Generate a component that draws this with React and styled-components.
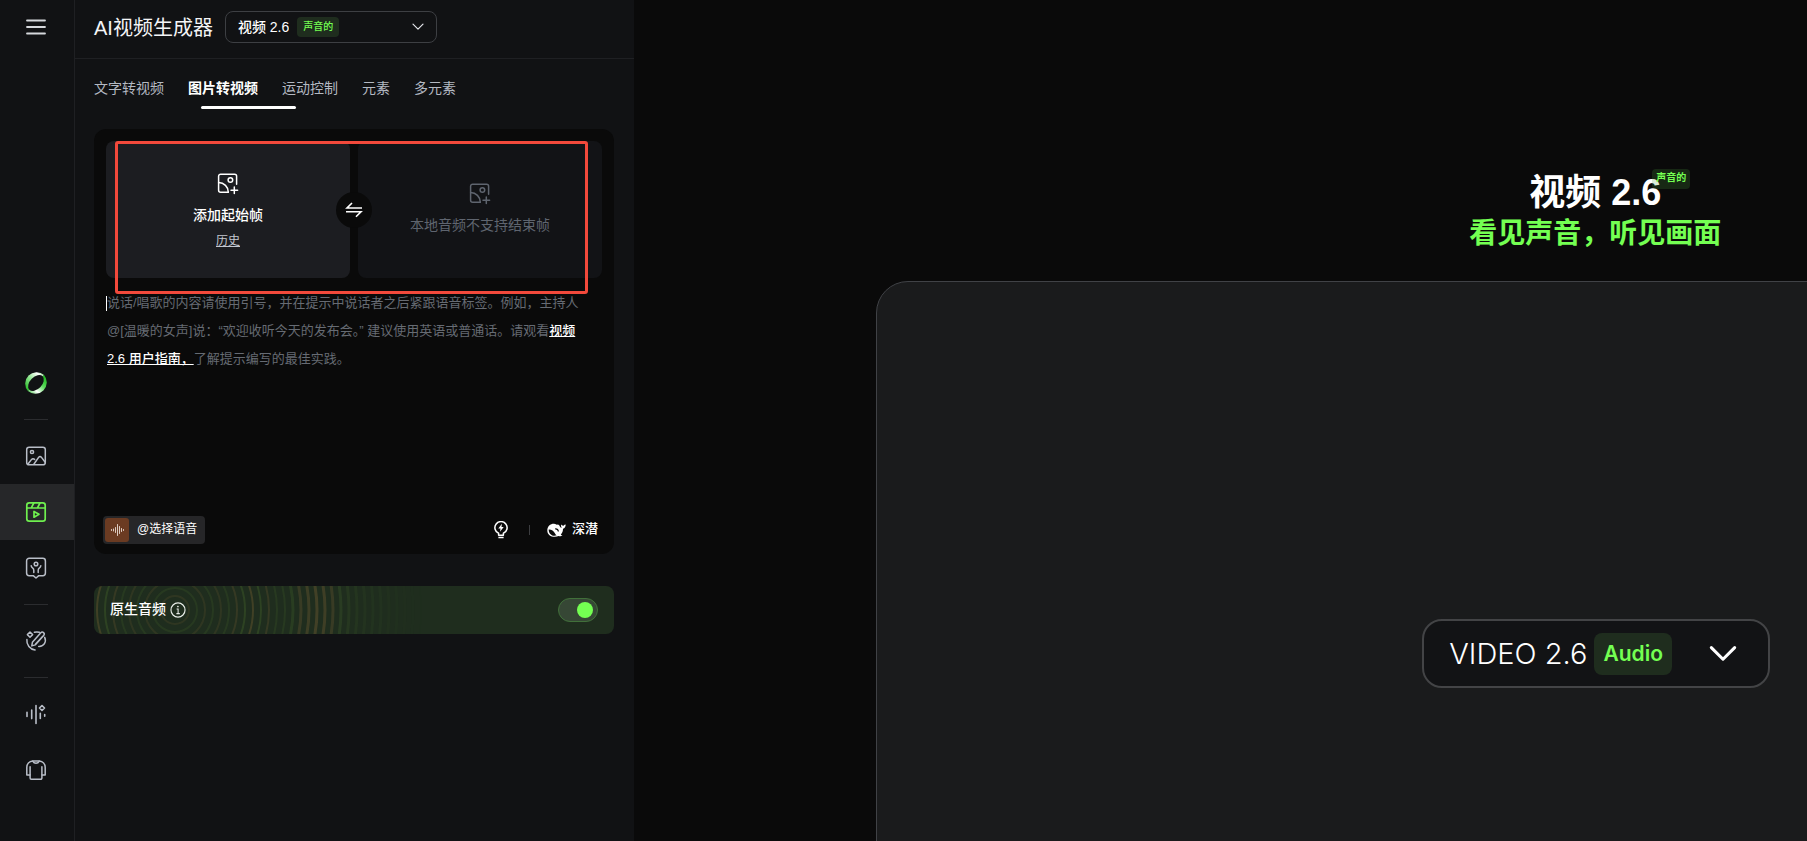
import React, { useState } from "react";
import styled, { createGlobalStyle, css } from "styled-components";

const GlobalStyle = createGlobalStyle`
  * {
    box-sizing: border-box;
  }

  body {
    margin: 0;
    background: #0a0a0a;
    color: #fff;
    font-family: "Liberation Sans", "Noto Sans CJK SC", sans-serif;
    font-size: 14px;
  }

  button, select, textarea {
    margin: 0;
    padding: 0;
    border: none;
    background: none;
    color: inherit;
    font: inherit;
  }

  button {
    cursor: pointer;
  }

  svg {
    display: block;
    flex: none;
  }
`;

const Layout = styled.div`
  display: flex;
  height: 100vh;
  overflow: hidden;
`;

/* Sidebar */

const Sidebar = styled.nav`
  flex: none;
  width: 75px;
  display: flex;
  flex-direction: column;
  padding: 15px 0 43px;
  background: #111214;
  border-right: 1px solid #1f2023;
`;

const MenuButton = styled.button`
  display: flex;
  margin: 0 24px auto;
  color: #d6d8dc;
`;

const NavItem = styled.a`
  flex: none;
  height: 56px;
  display: flex;
  align-items: center;
  padding-left: 24px;
  color: ${({ $active }) => ($active ? "#6ff04f" : "#b9bec8")};
  background: ${({ $active }) => ($active ? "#262729" : "transparent")};
`;

const NavDivider = styled.hr`
  width: 24px;
  height: 1px;
  margin: 8px 24px;
  border: none;
  background: #2b2c2f;
`;

/* Settings panel */

const Panel = styled.section`
  flex: none;
  width: 559px;
  background: #111214;
`;

const PanelHeader = styled.header`
  height: 59px;
  display: flex;
  align-items: center;
  gap: 12px;
  padding: 0 19px 4px;
  border-bottom: 1px solid #1f2023;
`;

const Title = styled.h1`
  margin: 0;
  padding-top: 2px;
  font-size: 20px;
  line-height: 28px;
  font-weight: 400;
  color: #f4f5f7;
`;

const ModelPicker = styled.div`
  width: 212px;
  height: 32px;
  display: flex;
  align-items: center;
  padding: 0 12px;
  border: 1px solid #3d3f43;
  border-radius: 8px;

  > svg {
    margin-left: auto;
    color: #e4e6ea;
  }
`;

const Select = styled.select`
  appearance: none;
  field-sizing: content;
  outline: none;
  font-weight: 500;
  cursor: pointer;

  option {
    background: #111214;
  }
`;

const Badge = styled.span`
  height: 20px;
  display: flex;
  align-items: center;
  padding: 0 6px 3px;
  border-radius: 4px;
  background: #1f2d1e;
  color: #74ff52;
  font-size: 10px;
  font-weight: 500;
`;

const PickerBadge = styled(Badge)`
  margin-left: 8px;
`;

const Tabs = styled.div`
  position: relative;
  display: flex;
  gap: 24px;
  padding: 18px 19px 0;
  height: 50px;
`;

const Tab = styled.button`
  height: 22px;
  line-height: 22px;
  color: #b4b9c2;

  ${({ $active }) =>
    $active &&
    css`
      color: #fff;
      font-weight: 700;
    `}
`;

const TabIndicator = styled.span`
  position: absolute;
  left: 126px;
  bottom: 0;
  width: 95px;
  height: 3px;
  border-radius: 2px;
  background: #fff;
`;

const PanelBody = styled.div`
  display: flex;
  flex-direction: column;
  gap: 32px;
  padding: 20px 20px 0 19px;
`;

const Composer = styled.div`
  position: relative;
  height: 425px;
  display: flex;
  flex-direction: column;
  padding: 12px 12px 10px;
  border-radius: 12px;
  background: #0a0a0a;
`;

const Frames = styled.div`
  position: relative;
  flex: none;
  height: 137px;
  display: grid;
  grid-template-columns: 1fr 1fr;
  gap: 8px;
`;

const Frame = styled.div`
  display: flex;
  flex-direction: column;
  align-items: center;
  padding-top: ${({ $disabled }) => ($disabled ? "40px" : "30px")};
  border-radius: 8px;
  background: ${({ $disabled }) => ($disabled ? "#121316" : "#1c1d21")};
  color: ${({ $disabled }) => ($disabled ? "#5f656f" : "#fff")};
`;

const FrameButton = styled.button`
  display: flex;
  flex-direction: column;
  align-items: center;
  gap: 10px;
  line-height: 20px;
  font-weight: ${({ disabled }) => (disabled ? 400 : 500)};
`;

const HistoryLink = styled.a`
  margin-top: 6px;
  font-size: 12px;
  line-height: 20px;
  color: #c3c7d0;
  text-decoration: underline;
`;

const SwapButton = styled.button`
  position: absolute;
  top: 50%;
  left: 50%;
  width: 36px;
  height: 36px;
  display: flex;
  align-items: center;
  justify-content: center;
  border-radius: 50%;
  background: #0a0a0a;
  transform: translate(-50%, -50%);
`;

const Highlight = styled.div`
  position: absolute;
  top: 12px;
  left: 21px;
  right: 26px;
  height: 153px;
  border: 3px solid #f2493b;
  border-radius: 3px;
  pointer-events: none;
`;

const Editor = styled.div`
  flex: 1;
  display: grid;
  margin-top: 11px;
  font-size: 13px;
  line-height: 28px;

  > * {
    grid-area: 1 / 1;
  }
`;

const PromptInput = styled.textarea`
  resize: none;
  outline: none;
  caret-color: transparent;
`;

const Placeholder = styled.p`
  margin: 0;
  padding-left: 1px;
  color: #666b73;
  pointer-events: none;
  white-space: nowrap;

  a {
    color: #fff;
    font-weight: 500;
    pointer-events: auto;
  }
`;

const Caret = styled.span`
  display: inline-block;
  width: 1px;
  height: 15px;
  margin-left: -1px;
  vertical-align: middle;
  background: #fff;
`;

const Toolbar = styled.div`
  flex: none;
  display: flex;
  align-items: center;
  margin: 0 4px 0 -3px;
`;

const VoiceButton = styled.button`
  height: 28px;
  display: flex;
  align-items: center;
  gap: 8px;
  margin-right: auto;
  padding: 0 8px 0 2px;
  border-radius: 4px;
  background: #262628;
  font-size: 12px;
  line-height: 18px;
`;

const VoiceCover = styled.span`
  width: 24px;
  height: 24px;
  display: flex;
  align-items: center;
  justify-content: center;
  border-radius: 3px;
  background: #6b3b22;
`;

const ToolButton = styled.button`
  display: flex;
  align-items: center;
  gap: 6px;
  font-size: 13px;
  line-height: 18px;
  font-weight: 500;
`;

const ToolLabel = styled.span`
  padding-bottom: 2px;
`;

const ToolDivider = styled.span`
  width: 1px;
  height: 10px;
  margin: 0 17px 0 21px;
  background: #3c3d40;
`;

const AudioRow = styled.div`
  position: relative;
  height: 48px;
  display: flex;
  align-items: center;
  justify-content: space-between;
  padding: 0 16px;
  border-radius: 8px;
  background: #1f2d1e;
  overflow: hidden;
`;

const RingArt = styled.svg`
  position: absolute;
  inset: 0;
`;

const AudioLabel = styled.label`
  position: relative;
  display: flex;
  align-items: center;
  gap: 4px;
  line-height: 20px;
  font-weight: 500;
`;

const LabelText = styled.span`
  padding-bottom: 2px;
`;

const Switch = styled.input`
  position: relative;
  appearance: none;
  width: 40px;
  height: 24px;
  margin: 0;
  padding: 3px 4px;
  border: 1px solid #41703a;
  border-radius: 12px;
  background: #364735;
  cursor: pointer;

  &::before {
    content: "";
    display: block;
    width: 16px;
    height: 16px;
    border-radius: 50%;
    background: #8a8f98;
  }

  &:checked::before {
    margin-left: auto;
    background: #74ff52;
  }
`;

/* Showcase */

const Main = styled.main`
  flex: 1;
  min-width: 0;
  overflow: hidden;
`;

const Stage = styled.div`
  width: 79.6vw;
  margin-left: 13.4vw;
  padding-top: 172px;
`;

const Hero = styled.div`
  display: flex;
  flex-direction: column;
  align-items: center;
  padding-bottom: 26px;
  font-weight: 700;
  line-height: 42px;
`;

const HeroTitle = styled.h2`
  position: relative;
  margin: 0;
  font-size: 36px;
`;

const HeroBadge = styled(Badge)`
  position: absolute;
  top: -3px;
  left: calc(100% - 9px);
  padding: 0 4px 2px;
  background: rgba(74, 160, 62, 0.2);
  font-weight: 700;
  line-height: 18px;
  white-space: nowrap;
`;

const HeroSubtitle = styled.p`
  margin: -1px 0 0;
  font-size: 28px;
  color: #74ff52;
`;

const Preview = styled.div`
  height: 809px;
  display: flex;
  flex-direction: column;
  align-items: center;
  padding: 337px 0 0 2px;
  border: 1px solid #404246;
  border-radius: 32px;
  background: #1a1b1c;
`;

const PreviewPicker = styled.div`
  width: 348px;
  height: 69px;
  display: flex;
  align-items: center;
  padding: 0 31px 0 25px;
  border: 2px solid #434446;
  border-radius: 20px;
  background: #121315;

  > svg {
    margin-left: auto;
  }
`;

const PreviewSelect = styled(Select)`
  font-family: Inter, "Liberation Sans", sans-serif;
  font-size: 29px;
  font-weight: 300;
`;

const PreviewBadge = styled.span`
  height: 42px;
  display: flex;
  align-items: center;
  margin-left: 7px;
  padding: 0 9px;
  border-radius: 8px;
  background: #1f2d1e;
  color: #74ff52;
  font-family: Inter, "Liberation Sans", sans-serif;
  font-size: 21px;
  font-weight: 600;
`;

/* Icons */

const Icon = ({ size = 24, stroke = 1.5, children }) => (
  <svg
    width={size}
    height={size}
    viewBox="0 0 24 24"
    fill="none"
    stroke="currentColor"
    strokeWidth={stroke}
    strokeLinecap="round"
    strokeLinejoin="round"
    aria-hidden="true"
  >
    {children}
  </svg>
);

const MenuIcon = () => (
  <Icon stroke={1.8}>
    <path d="M3 5.5h18M3 12h18M3 18.5h18" />
  </Icon>
);

const LogoIcon = () => (
  <svg width="24" height="24" viewBox="0 0 24 24" aria-hidden="true">
    <defs>
      <linearGradient id="logoTop" x1="0" y1="1" x2="1" y2="0">
        <stop offset="0" stopColor="#12b312" />
        <stop offset="0.45" stopColor="#8be58b" />
        <stop offset="0.8" stopColor="#fff" />
        <stop offset="1" stopColor="#5fd35f" />
      </linearGradient>
      <linearGradient id="logoBottom" x1="1" y1="0" x2="0" y2="1">
        <stop offset="0" stopColor="#0fae0f" />
        <stop offset="0.4" stopColor="#5ad95a" />
        <stop offset="0.7" stopColor="#fff" />
        <stop offset="1" stopColor="#2fbf2f" />
      </linearGradient>
    </defs>
    <path d="M3.9 20.1A11.5 11.5 0 0 1 20.1 3.9z" fill="url(#logoTop)" />
    <path d="M20.1 3.9A11.5 11.5 0 0 1 3.9 20.1z" fill="url(#logoBottom)" />
    <ellipse
      cx="12"
      cy="12"
      rx="9.4"
      ry="6"
      fill="#111214"
      transform="rotate(-45 12 12)"
    />
  </svg>
);

const ImageIcon = () => (
  <Icon>
    <rect x="2.7" y="3.2" width="18.6" height="17.6" rx="2.4" />
    <circle cx="8" cy="8" r="1.6" />
    <path d="M4 20l3.6-4.6q1.3-1.5 3 0M10 20l4.6-6.6q1.4-1.8 2.9 0l3.7 4.8" />
  </Icon>
);

const VideoIcon = () => (
  <Icon stroke={1.7}>
    <rect x="2.8" y="2.8" width="18.4" height="18.4" rx="2.4" />
    <path d="M2.8 8h18.4M7.3 7.8l2.5-4.8M13.5 7.8L16 3M10 11.4v5.8l5-2.9z" />
  </Icon>
);

const AvatarIcon = () => (
  <Icon>
    <path d="M5.2 2.3h13.6a2.6 2.6 0 0 1 2.6 2.6v12.2a2.6 2.6 0 0 1-2.6 2.6h-4L12 22l-2.8-2.3h-4a2.6 2.6 0 0 1-2.6-2.6V4.9a2.6 2.6 0 0 1 2.6-2.6z" />
    <circle cx="12" cy="8" r="1.8" />
    <path d="M7.2 9.8c.2 2.6 2.6 1.6 2.6 4.4v2.3M16.8 9.8c-.2 2.6-2.6 1.6-2.6 4.4v2.3" />
  </Icon>
);

const BrushIcon = () => (
  <Icon>
    <path d="M6 3l2.6 2.6L6 8.2 3.4 5.6z" />
    <path d="M2.9 10.6a9.4 9.4 0 0 0 8.2 10.4M10.4 3.3c1.6-.5 3.3-.5 4.9 0M20.7 8.4c2 4.4-.7 9.3-6 9" />
    <path d="M16.8 3.8a1.9 1.9 0 0 1 2.9 2.6l-8.5 9.5-3.4 1 .6-3.6zM11.6 15l7.4-8" />
  </Icon>
);

const AudioIcon = () => (
  <Icon stroke={1.6}>
    <path d="M3 10.2v4.2M7.7 8v8.6M12 3.6v17.8M16.3 11.2v5.2M20.7 12.6v1.6" />
    <path d="M18 3.5l2.5 2.5L18 8.5 15.5 6z" />
  </Icon>
);

const ShirtIcon = () => (
  <Icon>
    <path d="M8.6 3h6.8c3.3.4 5.8 3 5.8 6.4v7.5h-3.3v3.2a1.2 1.2 0 0 1-1.2 1.2H7.3a1.2 1.2 0 0 1-1.2-1.2v-3.2H2.8V9.4C2.8 6 5.3 3.4 8.6 3z" />
    <path d="M8.8 3.2c1 2.6 5.4 2.6 6.4 0M6.1 8.8v8M17.9 8.8v8" />
  </Icon>
);

const AddImageIcon = () => (
  <Icon>
    <path d="M12.3 21.2H4.6a2 2 0 0 1-2-2V5.2a2 2 0 0 1 2-2h14a2 2 0 0 1 2 2v8" />
    <path d="M2.6 11.6c5.4 0 9.7 4.2 9.7 9.6M18.3 16v6.6M15 19.3h6.6" />
    <circle cx="14.4" cy="9" r="2.3" />
  </Icon>
);

const SwapIcon = () => (
  <svg
    width="18"
    height="18"
    viewBox="0 0 18 18"
    fill="none"
    stroke="#fff"
    strokeWidth="1.6"
    aria-hidden="true"
  >
    <path d="M17 7H2l5-5M1 10.8h15l-5 5" />
  </svg>
);

const ChevronIcon = ({ width = 10, stroke = 1.2 }) => (
  <svg
    width={width}
    height={width * 0.6}
    viewBox="-1 -1 12 7"
    fill="none"
    stroke="currentColor"
    strokeWidth={stroke}
    strokeLinecap="round"
    strokeLinejoin="round"
    aria-hidden="true"
  >
    <path d="M0 0l5 5 5-5" />
  </svg>
);

const VoiceIcon = () => (
  <svg
    width="13"
    height="12"
    viewBox="0 0 13 12"
    stroke="#dccabf"
    strokeLinecap="round"
    aria-hidden="true"
  >
    <path d="M.5 5.500v1M2.500 5v2M4.500 3.500v5M6.500.5v11M8.500 2.500v7M10.500 4.500v3M12.500 5.500v1" />
  </svg>
);

const BulbIcon = () => (
  <svg width="14" height="18" viewBox="0 0 14 18" fill="none" aria-hidden="true">
    <path
      d="M4.6 14.2V12.300A6.100 6.100 0 1 1 9.400 12.300v1.900zM4.400 16.600h5.200"
      stroke="#fff"
      strokeWidth="1.500"
      strokeLinejoin="round"
    />
    <path d="M7.900 2.800L4.300 7.600h2.200L6 10.800l3.700-4.700H7.500z" fill="#fff" />
  </svg>
);

const WhaleIcon = () => (
  <svg width="19" height="15" viewBox="0 0 19 15" aria-hidden="true">
    <path
      d="M7 .8c1.600 0 2.400.8 3 1.100.8-.5 1.500-.3 2.100.3.700.7.8 1.800 1.600 2.400.3.300.7.300 1 .2-.7-1-.9-2.200-.3-3.300.6.8 1.300 1.200 2.100 1.200.6-.8 1.300-1.200 2.200-1.200 0 2.200-1 3.700-2.700 4.300 0 2.400-.7 4.300-2.200 5.700.4.600 1 .9 1.700 1-1.200.9-2.500 1-3.800.5C6.200 15.300.3 12.500.3 7.400.3 3.500 3.200.8 7 .8z"
      fill="#fff"
    />
    <path
      d="M1.700 6.400c2.600-.2 5 1.400 6.200 3.900.5 1 1 1.600 1.900 2-3.900 1.700-8.300-1.200-8.100-5.900z"
      fill="#0a0a0a"
    />
    <path d="M8.200 5.900c1.700-.2 2.900.9 3.200 2.600" stroke="#0a0a0a" strokeWidth="1.200" fill="none" />
  </svg>
);

const InfoIcon = () => (
  <svg width="16" height="16" viewBox="0 0 15 15" fill="none" aria-hidden="true">
    <circle cx="7.5" cy="7.5" r="6.6" stroke="#e6ebe6" strokeWidth="1.1" />
    <path d="M6.2 6.5h1.400v4.300M6 10.900h3.200" stroke="#e6ebe6" />
    <circle cx="7.4" cy="4.2" r="0.8" fill="#e6ebe6" />
  </svg>
);

// faint near the centre, strongest around two bands, gone at the right end
const rings = Array.from({ length: 30 }, (_, i) => {
  const radius = 14 + i * 8;
  const fade = Math.min(1, Math.max(0, (250 - radius) / 110));
  const band = Math.max(
    0,
    1 - Math.abs(radius - 146) / 34,
    0.8 - Math.abs(radius - 78) / 30
  );
  return {
    radius,
    opacity: (0.14 + band * 0.18) * fade,
    width: radius > 110 ? 3 : 2,
    warm: radius < 100 ? i % 2 === 0 : radius > 120 && radius < 165,
  };
});

const Rings = () => (
  <RingArt width="340" height="48" aria-hidden="true">
    {rings.map(({ radius, opacity, width, warm }) => (
      <circle
        key={radius}
        cx="81"
        cy="24"
        r={radius}
        fill="none"
        stroke={warm ? "#94703a" : "#5f8a34"}
        strokeWidth={width}
        opacity={opacity}
      />
    ))}
  </RingArt>
);

const navGroups = [
  [
    { label: "图片", icon: <ImageIcon /> },
    { label: "视频", icon: <VideoIcon />, active: true },
    { label: "数字人", icon: <AvatarIcon /> },
  ],
  [{ label: "编辑", icon: <BrushIcon /> }],
  [
    { label: "音频", icon: <AudioIcon /> },
    { label: "试衣", icon: <ShirtIcon /> },
  ],
];

const tabs = ["文字转视频", "图片转视频", "运动控制", "元素", "多元素"];

const App = () => {
  const [tab, setTab] = useState("图片转视频");
  const [prompt, setPrompt] = useState("");
  const [nativeAudio, setNativeAudio] = useState(true);

  return (
    <>
      <GlobalStyle />
      <Layout>
        <Sidebar>
          <MenuButton aria-label="菜单">
            <MenuIcon />
          </MenuButton>
          <NavItem href="#" aria-label="首页">
            <LogoIcon />
          </NavItem>
          {navGroups.map((group) => (
            <React.Fragment key={group[0].label}>
              <NavDivider />
              {group.map(({ label, icon, active }) => (
                <NavItem key={label} href="#" aria-label={label} $active={active}>
                  {icon}
                </NavItem>
              ))}
            </React.Fragment>
          ))}
        </Sidebar>

        <Panel>
          <PanelHeader>
            <Title>AI视频生成器</Title>
            <ModelPicker>
              <Select aria-label="模型">
                <option>视频 2.6</option>
              </Select>
              <PickerBadge>声音的</PickerBadge>
              <ChevronIcon width={12} />
            </ModelPicker>
          </PanelHeader>

          <Tabs role="tablist">
            {tabs.map((name) => (
              <Tab
                key={name}
                role="tab"
                aria-selected={name === tab}
                $active={name === tab}
                onClick={() => setTab(name)}
              >
                {name}
              </Tab>
            ))}
            <TabIndicator />
          </Tabs>

          <PanelBody>
            <Composer>
              <Frames>
                <Frame>
                  <FrameButton>
                    <AddImageIcon />
                    添加起始帧
                  </FrameButton>
                  <HistoryLink href="#">历史</HistoryLink>
                </Frame>
                <Frame $disabled>
                  <FrameButton disabled>
                    <AddImageIcon />
                    本地音频不支持结束帧
                  </FrameButton>
                </Frame>
                <SwapButton aria-label="交换">
                  <SwapIcon />
                </SwapButton>
              </Frames>
              <Highlight />

              <Editor>
                <PromptInput
                  aria-label="提示词"
                  value={prompt}
                  onChange={(e) => setPrompt(e.target.value)}
                />
                {!prompt && (
                  <Placeholder>
                    <Caret />
                    说话/唱歌的内容请使用引号，并在提示中说话者之后紧跟语音标签。例如，主持人
                    <br />
                    @[温暖的女声]说：“欢迎收听今天的发布会。” 建议使用英语或普通话。请观看
                    <a href="#">
                      视频
                      <br />
                      2.6 用户指南，
                    </a>
                    了解提示编写的最佳实践。
                  </Placeholder>
                )}
              </Editor>

              <Toolbar>
                <VoiceButton>
                  <VoiceCover>
                    <VoiceIcon />
                  </VoiceCover>
                  <ToolLabel>@选择语音</ToolLabel>
                </VoiceButton>
                <ToolButton aria-label="灵感">
                  <BulbIcon />
                </ToolButton>
                <ToolDivider />
                <ToolButton>
                  <WhaleIcon />
                  <ToolLabel>深潜</ToolLabel>
                </ToolButton>
              </Toolbar>
            </Composer>

            <AudioRow>
              <Rings />
              <AudioLabel htmlFor="native-audio">
                <LabelText>原生音频</LabelText>
                <InfoIcon />
              </AudioLabel>
              <Switch
                id="native-audio"
                type="checkbox"
                role="switch"
                checked={nativeAudio}
                onChange={(e) => setNativeAudio(e.target.checked)}
              />
            </AudioRow>
          </PanelBody>
        </Panel>

        <Main>
          <Stage>
            <Hero>
              <HeroTitle>
                视频 2.6
                <HeroBadge>声音的</HeroBadge>
              </HeroTitle>
              <HeroSubtitle>看见声音，听见画面</HeroSubtitle>
            </Hero>
            <Preview>
              <PreviewPicker>
                <PreviewSelect aria-label="Model">
                  <option>VIDEO 2.6</option>
                </PreviewSelect>
                <PreviewBadge>Audio</PreviewBadge>
                <ChevronIcon width={28} stroke={1.3} />
              </PreviewPicker>
            </Preview>
          </Stage>
        </Main>
      </Layout>
    </>
  );
};

export default App;
